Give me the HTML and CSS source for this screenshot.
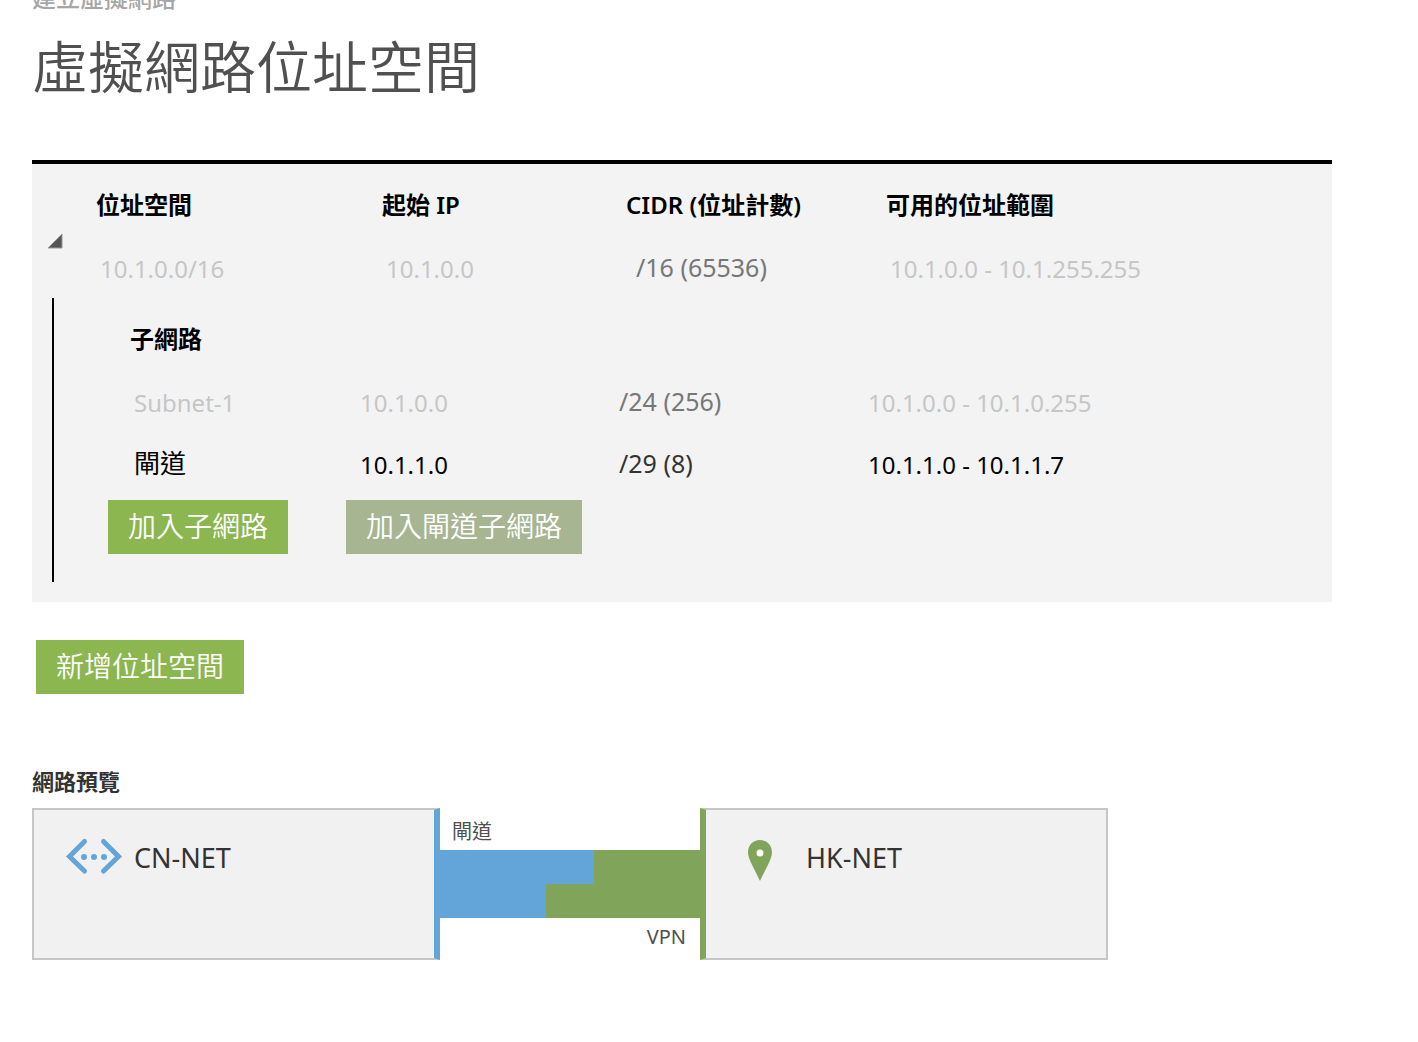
FILE: index.html
```html
<!DOCTYPE html>
<html lang="zh-Hant">
<head>
<meta charset="utf-8">
<meta name="viewport" content="width=device-width, initial-scale=1">
<title>虛擬網路位址空間</title>
<link rel="stylesheet" href="styles.css">
</head>
<body>
<main class="page">
  <header class="page-header">
    <p class="wizard-name">建立虛擬網路</p>
    <h1 class="page-title">虛擬網路位址空間</h1>
  </header>

  <section class="panel">
    <div class="space">
      <button class="toggle" type="button" aria-expanded="true" aria-label="位址空間">
        <svg class="toggle-icon" viewBox="0 0 16 16" aria-hidden="true"><path d="M15 1v14H1z" fill="#555" stroke="#999" stroke-width="1"/></svg>
      </button>
      <table class="grid space-grid">
        <colgroup><col class="space-name"><col class="space-start"><col class="space-cidr"><col></colgroup>
        <thead>
          <tr><th scope="col">位址空間</th><th scope="col">起始 IP</th><th scope="col">CIDR (位址計數)</th><th scope="col">可用的位址範圍</th></tr>
        </thead>
        <tbody>
          <tr class="locked"><td>10.1.0.0/16</td><td>10.1.0.0</td><td class="cidr">/16 (65536)</td><td>10.1.0.0 - 10.1.255.255</td></tr>
        </tbody>
      </table>
    </div>

    <div class="subnets">
      <table class="grid subnet-grid">
        <caption>子網路</caption>
        <colgroup><col class="subnet-name"><col class="subnet-start"><col class="subnet-cidr"><col></colgroup>
        <tbody>
          <tr class="locked"><td>Subnet-1</td><td>10.1.0.0</td><td class="cidr">/24 (256)</td><td>10.1.0.0 - 10.1.0.255</td></tr>
          <tr><td class="gateway-name">閘道</td><td>10.1.1.0</td><td class="cidr">/29 (8)</td><td>10.1.1.0 - 10.1.1.7</td></tr>
        </tbody>
      </table>
      <div class="subnet-actions">
        <button class="btn" type="button">加入子網路</button>
        <button class="btn" type="button" disabled>加入閘道子網路</button>
      </div>
    </div>
  </section>

  <div class="space-actions">
    <button class="btn" type="button">新增位址空間</button>
  </div>

  <section class="preview">
    <h2 class="preview-title">網路預覽</h2>
    <div class="diagram">
      <div class="network network-cloud">
        <svg class="network-icon" viewBox="0 0 60 40" aria-hidden="true">
          <g fill="none" stroke="#64a5d9" stroke-width="5" stroke-linecap="round"><path d="M20.500 5.500L5.500 20.500l15 14.500M39.500 5.500l15 15-15 14.500"/></g>
          <g fill="#64a5d9"><circle cx="20" cy="21" r="3"/><circle cx="30" cy="21" r="3"/><circle cx="40" cy="21" r="3"/></g>
        </svg>
        <span>CN-NET</span>
      </div>
      <div class="link">
        <span class="link-label">閘道</span>
        <svg class="link-bar" viewBox="0 0 260 68" preserveAspectRatio="none" aria-hidden="true">
          <path d="M0 0h260v68H0z" fill="#80a55a"/>
          <path d="M0 0h154v34h-48v34H0z" fill="#64a5d9"/>
        </svg>
        <span class="link-label link-label-end">VPN</span>
      </div>
      <div class="network network-local">
        <svg class="network-icon" viewBox="0 0 60 40" aria-hidden="true">
          <path d="M30 4C23 4 18 9 18 16.500C18 23 25 34 30 45C35 34 42 23 42 16.500C42 9 37 4 30 4z" fill="#80a55a"/>
          <circle cx="30" cy="17" r="3.500" fill="#fff"/>
        </svg>
        <span>HK-NET</span>
      </div>
    </div>
  </section>
</main>
</body>
</html>
```

FILE: styles.css
```css
* {
  box-sizing: border-box;
}

body {
  margin: 0;
  background: #fff;
  color: #000;
  font-family: "Noto Sans", "Noto Sans CJK TC", sans-serif;
  font-size: 24px;
  line-height: 32px;
}

.page {
  padding: 0 86px 40px 32px;
}

/* The dialog is scrolled, so the wizard name is cut off at the top. */
.page-header {
  margin-top: -18px;
}

.wizard-name {
  margin: 0;
  color: #a6a6a6;
  font-weight: 500;
}

.page-title {
  margin: 12px 0 54px;
  color: #505050;
  font-size: 56px;
  font-weight: 350;
  line-height: 80px;
}

.panel {
  padding: 20px 0;
  border-top: 4px solid #000;
  background: #f3f3f3;
}

.space {
  display: flex;
  align-items: center;
}

.toggle {
  flex: none;
  width: 64px;
  padding: 0 0 0 15px;
  border: 0;
  background: none;
  text-align: left;
}

.toggle-icon {
  display: block;
  width: 16px;
  height: 16px;
}

.grid {
  width: 100%;
  table-layout: fixed;
  border-collapse: collapse;
}

.grid th,
.grid caption {
  font-weight: 600;
  text-align: left;
}

.grid th {
  height: 56px;
  padding: 5px 0;
  vertical-align: top;
}

.grid td {
  height: 62px;
  padding: 0 0 0 4px;
}

.space-grid td {
  height: 58px;
}

.grid .cidr {
  padding-bottom: 4px;
  color: #333;
  font-size: 25px;
}

.space-grid .cidr {
  padding-left: 10px;
}

.locked td {
  color: #c6c6c6;
}

.locked .cidr {
  color: #777;
}

.space-name { width: 286px; }
.space-start { width: 244px; }
.space-cidr { width: 260px; }
.subnet-name { width: 226px; }
.subnet-start { width: 259px; }
.subnet-cidr { width: 249px; }

.subnets {
  margin-left: 20px;
  padding: 10px 0 28px 54px;
  border-left: 2px solid #000;
}

.subnet-grid {
  width: calc(100% - 22px);
  margin-left: 22px;
}

.subnet-grid caption {
  padding: 15px 0 17px;
}

.grid .gateway-name {
  padding-bottom: 4px;
  font-size: 26px;
}

.subnet-actions {
  display: flex;
  flex-wrap: wrap;
  gap: 58px;
  padding-top: 4px;
}

.btn {
  height: 54px;
  padding: 0 20px 2px;
  border: 0;
  background: #8cb64f;
  color: #fff;
  font-family: inherit;
  font-size: 28px;
  font-weight: 350;
  line-height: 52px;
}

.btn:disabled {
  background: #a7b592;
}

.space-actions {
  padding: 38px 4px 0;
}

.preview {
  padding-top: 71px;
}

.preview-title {
  margin: 0 0 11px;
  color: #333;
  font-size: 22px;
  font-weight: 600;
  line-height: 32px;
}

.diagram {
  display: grid;
  grid-template-columns: 408fr 260fr 408fr;
  max-width: 1076px;
}

.network {
  display: flex;
  align-items: flex-start;
  min-height: 152px;
  padding: 26px 30px;
  border: 2px solid #c6c6c6;
  background: #f1f1f1;
  color: #333;
  font-size: 27px;
  line-height: 44px;
}

.network-icon {
  flex: none;
  width: 60px;
  height: 40px;
  overflow: visible;
}

.network-cloud {
  gap: 10px;
  border-right: 6px solid #64a5d9;
}

.network-local {
  gap: 16px;
  padding: 26px 24px;
  border-left: 6px solid #80a55a;
}

.link {
  display: flex;
  flex-direction: column;
}

.link-label {
  height: 42px;
  padding: 4px 12px 0;
  color: #505050;
  font-size: 20px;
  line-height: 40px;
}

.link-label-end {
  padding: 0 14px 4px;
  line-height: 38px;
  text-align: right;
}

.link-bar {
  display: block;
  width: 100%;
  height: 68px;
}
```
